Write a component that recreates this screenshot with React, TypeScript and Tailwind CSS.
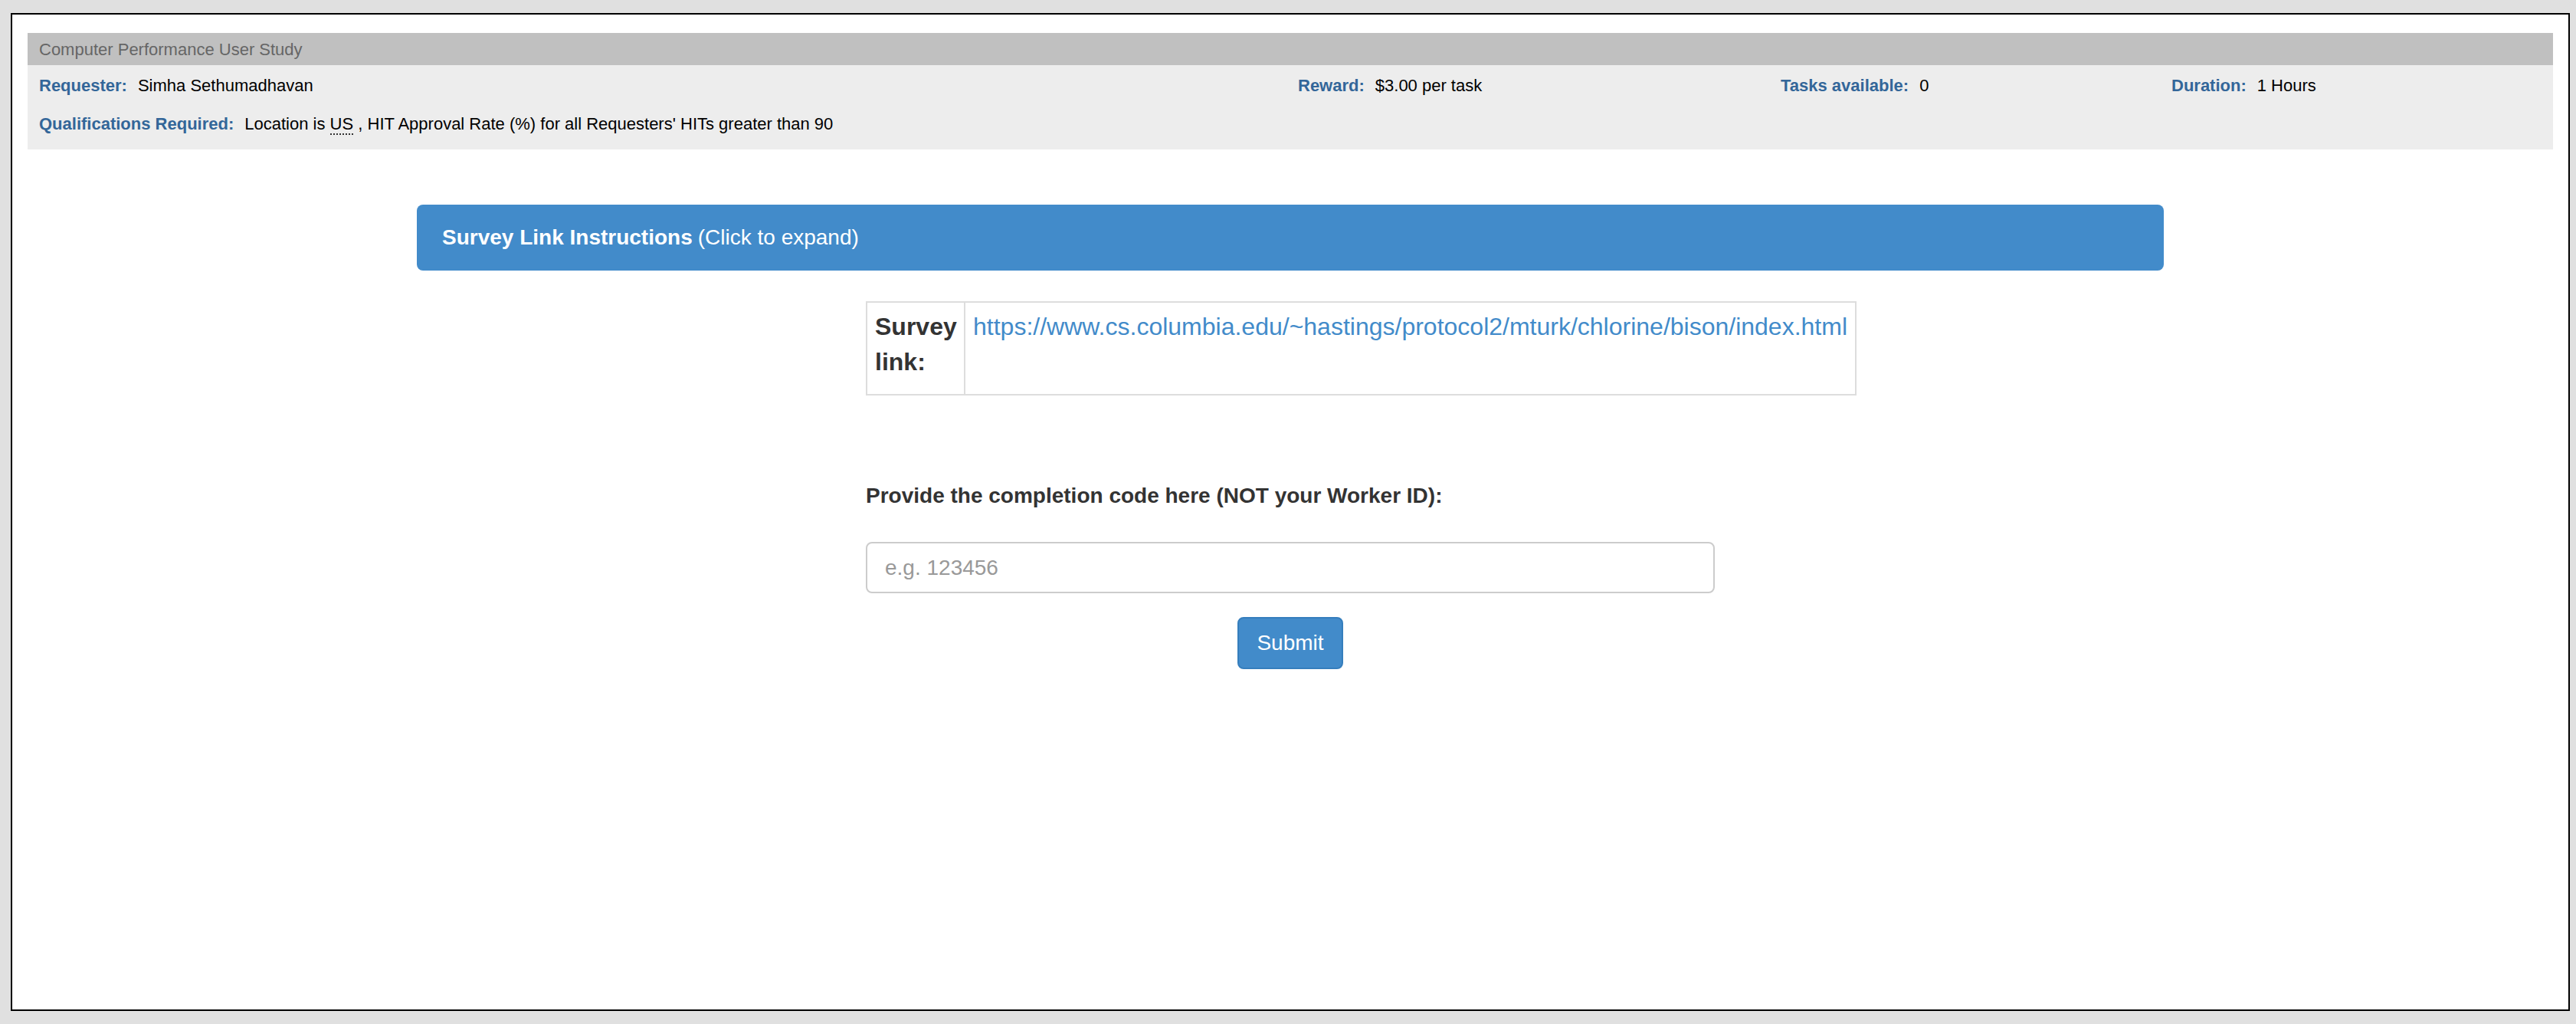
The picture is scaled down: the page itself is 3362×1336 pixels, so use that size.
import React from "react";

export default function App() {
  return (
    <div className="w-[3362px] h-[1336px] bg-[#e0e0e0] pt-[17px] pl-[14px] font-['Liberation_Sans',Arial,sans-serif] overflow-hidden">
      <div className="w-[3340px] h-[1302px] border-2 border-black bg-white px-[20px] pt-[24px]">
        {/* HIT header */}
        <div className="h-[42px] bg-[#c0c0c0] flex items-center pl-[15px] text-[22px] text-[#666]">
          Computer Performance User Study
        </div>
        <div className="bg-[#ededed] h-[110px] pt-[1px] pl-[15px] text-[22px] text-black">
          <div className="h-[50px] grid grid-cols-[1643px_630px_510px_1fr] items-center">
            <div className="flex items-center">
              <span className="font-bold text-[#336699]">Requester:</span>
              <span className="ml-[14px]">Simha Sethumadhavan</span>
            </div>
            <div className="flex items-center">
              <span className="font-bold text-[#336699]">Reward:</span>
              <span className="ml-[14px]">$3.00 per task</span>
            </div>
            <div className="flex items-center">
              <span className="font-bold text-[#336699]">Tasks available:</span>
              <span className="ml-[14px]">0</span>
            </div>
            <div className="flex items-center">
              <span className="font-bold text-[#336699]">Duration:</span>
              <span className="ml-[14px]">1 Hours</span>
            </div>
          </div>
          <div className="h-[50px] flex items-center">
            <span className="font-bold text-[#336699]">Qualifications Required:</span>
            <span className="ml-[14px]">
              Location is{" "}
              <abbr title="United States" className="no-underline border-b-2 border-dotted border-[#333]">
                US
              </abbr>{" "}
              , HIT Approval Rate (%) for all Requesters' HITs greater than 90
            </span>
          </div>
        </div>

        {/* Survey content */}
        <div className="w-[2280px] mx-auto mt-[72px]">
          <div className="h-[86px] bg-[#428bca] rounded-[8px] flex items-center pl-[33px] text-[28px] text-white">
            <span className="font-bold">Survey Link Instructions</span>
            <span className="ml-[7px]">(Click to expand)</span>
          </div>

          <div className="ml-[586px] mt-[40px] flex w-fit border-2 border-[#ddd] text-[32px] leading-[46px]">
            <div className="w-[126px] px-[10px] pt-[8px] pb-[19px] font-bold text-[#333]">
              Survey link:
            </div>
            <div className="border-l-2 border-[#ddd] px-[10px] pt-[8px] whitespace-nowrap">
              <a
                href="#"
                className="text-[#428bca]"
              >
                https://www.cs.columbia.edu/~hastings/protocol2/mturk/chlorine/bison/index.html
              </a>
            </div>
          </div>

          <div className="ml-[586px] mt-[111px] text-[28px] leading-[40px] font-bold text-[#333]">
            Provide the completion code here (NOT your Worker ID):
          </div>

          <div className="ml-[586px] mt-[40px]">
            <input
              type="text"
              placeholder="e.g. 123456"
              className="w-[1108px] h-[67px] border-2 border-[#ccc] rounded-[8px] px-[23px] text-[28px] text-[#555] placeholder:text-[#999] outline-none bg-white"
            />
          </div>

          <div className="mt-[31px] flex justify-center">
            <button className="w-[138px] h-[68px] bg-[#428bca] border-2 border-[#357ebd] rounded-[8px] text-white text-[28px]">
              Submit
            </button>
          </div>
        </div>
      </div>
    </div>
  );
}
